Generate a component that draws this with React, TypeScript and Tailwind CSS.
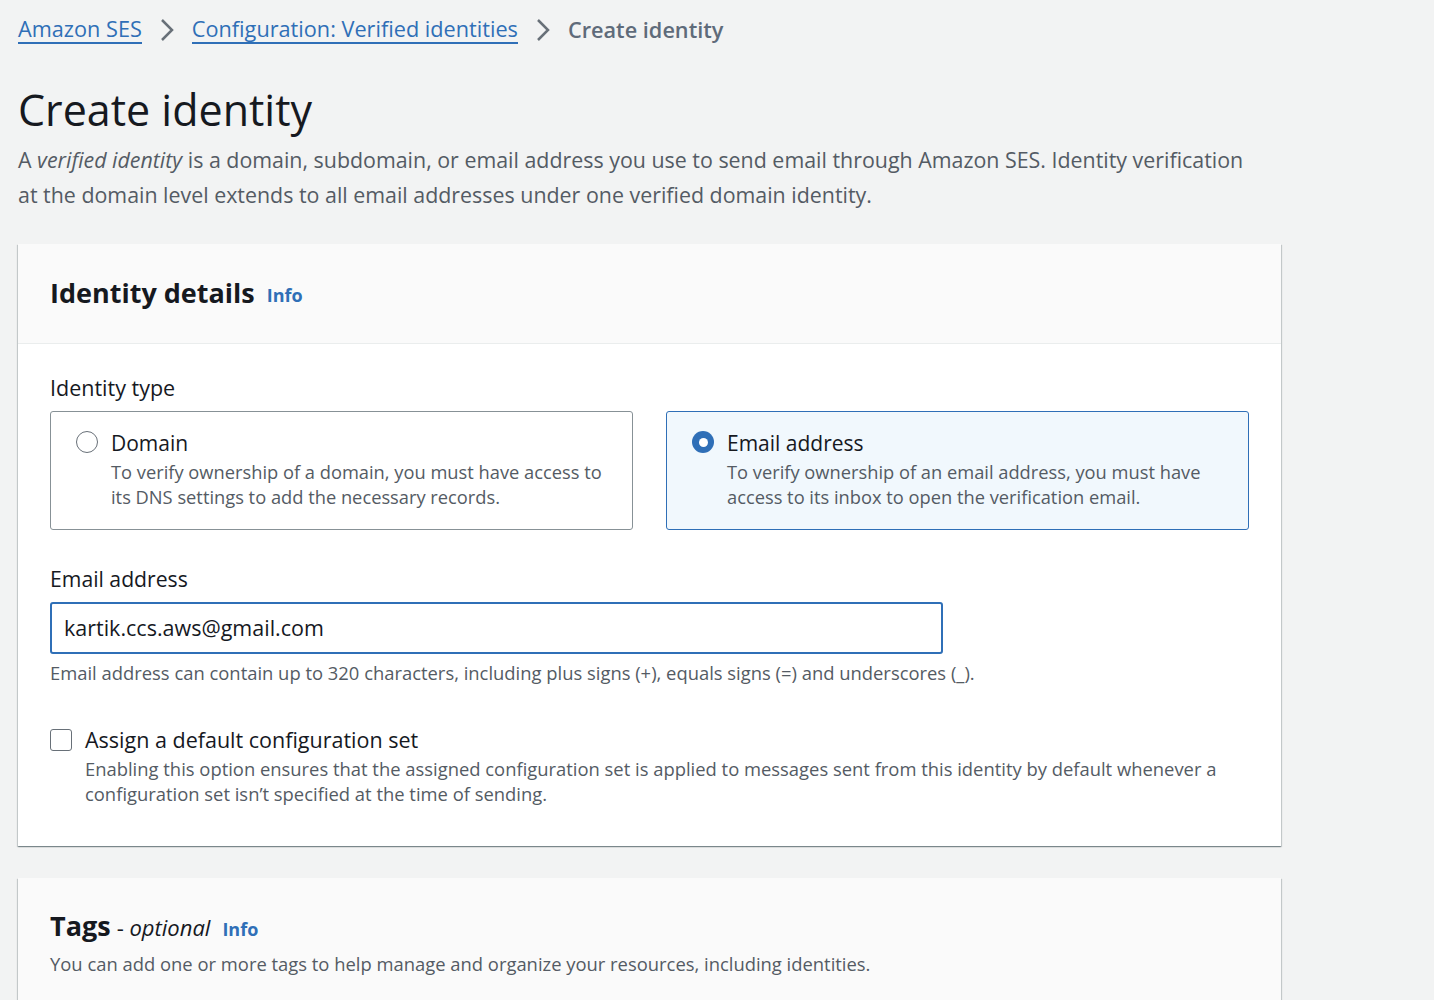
import React from "react";

const FONT = { fontFamily: '"Open Sans", "Noto Sans", Arial, sans-serif' };

function Chevron() {
  return (
    <svg width="14" height="24" viewBox="0 0 14 24" className="mx-[18px] shrink-0">
      <path d="M2 2 L12 12 L2 22" fill="none" stroke="#687078" strokeWidth="2.5" />
    </svg>
  );
}

function RadioTile({
  selected,
  title,
  lines,
}: {
  selected: boolean;
  title: string;
  lines: string[];
}) {
  return (
    <div
      className={`flex gap-[13px] rounded-[3px] border px-[25px] pt-[18px] pb-[20px] ${
        selected ? "border-[#2f6fb7] bg-[#f1f8fd]" : "border-[#879196] bg-white"
      }`}
    >
      <div className="pt-[1px]">
        {selected ? (
          <div className="flex h-[22px] w-[22px] items-center justify-center rounded-full bg-[#2f6fb7]">
            <div className="h-[9px] w-[9px] rounded-full bg-white" />
          </div>
        ) : (
          <div className="h-[22px] w-[22px] rounded-full border-[1.5px] border-[#687078] bg-white" />
        )}
      </div>
      <div>
        <div className="text-[21px] leading-[26px] text-[#16191f]">{title}</div>
        <div className="mt-[3px] text-[18.3px] leading-[25px] text-[#545b64]">
          {lines.map((l) => (
            <div key={l} className="whitespace-nowrap">
              {l}
            </div>
          ))}
        </div>
      </div>
    </div>
  );
}

export default function App() {
  return (
    <div className="min-h-[1000px] bg-[#f2f3f3] pl-[18px] pr-[153px]" style={FONT}>
      {/* Breadcrumbs */}
      <nav className="flex h-[60px] items-center text-[21.7px]">
        <a className="border-b-2 border-[#2f6fb7] leading-[26px] text-[#2f6fb7]">Amazon SES</a>
        <Chevron />
        <a className="border-b-2 border-[#2f6fb7] leading-[26px] text-[#2f6fb7]">
          Configuration: Verified identities
        </a>
        <Chevron />
        <span className="font-semibold leading-[26px] text-[#5f6b7a]">Create identity</span>
      </nav>

      {/* Header */}
      <h1 className="mt-[22px] text-[43px] leading-[56px] text-[#16191f]">Create identity</h1>
      <p className="mt-[4px] whitespace-nowrap text-[21.4px] leading-[35px] text-[#545b64]">
        A <i>verified identity</i> is a domain, subdomain, or email address you use to send email through Amazon
        SES. Identity verification
        <br />
        at the domain level extends to all email addresses under one verified domain identity.
      </p>

      {/* Identity details */}
      <section className="mt-[32px] bg-white shadow-[0_1px_1px_0_rgba(0,28,36,0.3),1px_1px_1px_0_rgba(0,28,36,0.15),-1px_1px_1px_0_rgba(0,28,36,0.15)]">
        <div className="flex h-[100px] items-center border-b border-[#eaeded] bg-[#fafafa] px-[32px]">
          <h2 className="text-[27px] font-bold text-[#16191f]">Identity details</h2>
          <a className="ml-[12px] mt-[4px] text-[18px] font-bold text-[#2f6fb7]">Info</a>
        </div>
        <div className="px-[32px] pt-[30px] pb-[40px]">
          <div className="text-[21.5px] leading-[28px] text-[#16191f]">Identity type</div>
          <div className="mt-[9px] grid grid-cols-2 gap-[33px]">
            <RadioTile
              selected={false}
              title="Domain"
              lines={[
                "To verify ownership of a domain, you must have access to",
                "its DNS settings to add the necessary records.",
              ]}
            />
            <RadioTile
              selected
              title="Email address"
              lines={[
                "To verify ownership of an email address, you must have",
                "access to its inbox to open the verification email.",
              ]}
            />
          </div>

          <div className="mt-[35px] text-[21.2px] leading-[28px] text-[#16191f]">Email address</div>
          <div className="mt-[9px] flex h-[52px] w-[893px] items-center rounded-[3px] border-2 border-[#2f6fb7] bg-white px-[12px] text-[21.5px] text-[#16191f]">
            kartik.ccs.aws@gmail.com
          </div>
          <div className="mt-[6px] text-[18.4px] leading-[26px] text-[#545b64]">
            Email address can contain up to 320 characters, including plus signs (+), equals signs (=) and
            underscores (_).
          </div>

          <div className="mt-[40px] flex gap-[13px]">
            <div className="pt-[3px]">
              <div className="h-[22px] w-[22px] rounded-[3px] border-[1.5px] border-[#687078] bg-white" />
            </div>
            <div>
              <div className="text-[21.5px] leading-[28px] text-[#16191f]">Assign a default configuration set</div>
              <div className="mt-[2px] text-[18.4px] leading-[25px] text-[#545b64]">
                Enabling this option ensures that the assigned configuration set is applied to messages sent from
                this identity by default whenever a
                <br />
                configuration set isn’t specified at the time of sending.
              </div>
            </div>
          </div>
        </div>
      </section>

      {/* Tags */}
      <section className="mt-[32px] bg-[#fafafa] shadow-[0_1px_1px_0_rgba(0,28,36,0.3),1px_1px_1px_0_rgba(0,28,36,0.15),-1px_1px_1px_0_rgba(0,28,36,0.15)]">
        <div className="px-[32px] pt-[28px] pb-[40px]">
          <div className="flex items-baseline">
            <h2 className="text-[27px] font-bold text-[#16191f]">Tags</h2>
            <span className="ml-[6px] text-[22px] text-[#16191f]">
              - <i>optional</i>
            </span>
            <a className="ml-[12px] text-[18px] font-bold text-[#2f6fb7]">Info</a>
          </div>
          <div className="mt-[4px] text-[18.4px] leading-[26px] text-[#545b64]">
            You can add one or more tags to help manage and organize your resources, including identities.
          </div>
        </div>
      </section>
    </div>
  );
}
